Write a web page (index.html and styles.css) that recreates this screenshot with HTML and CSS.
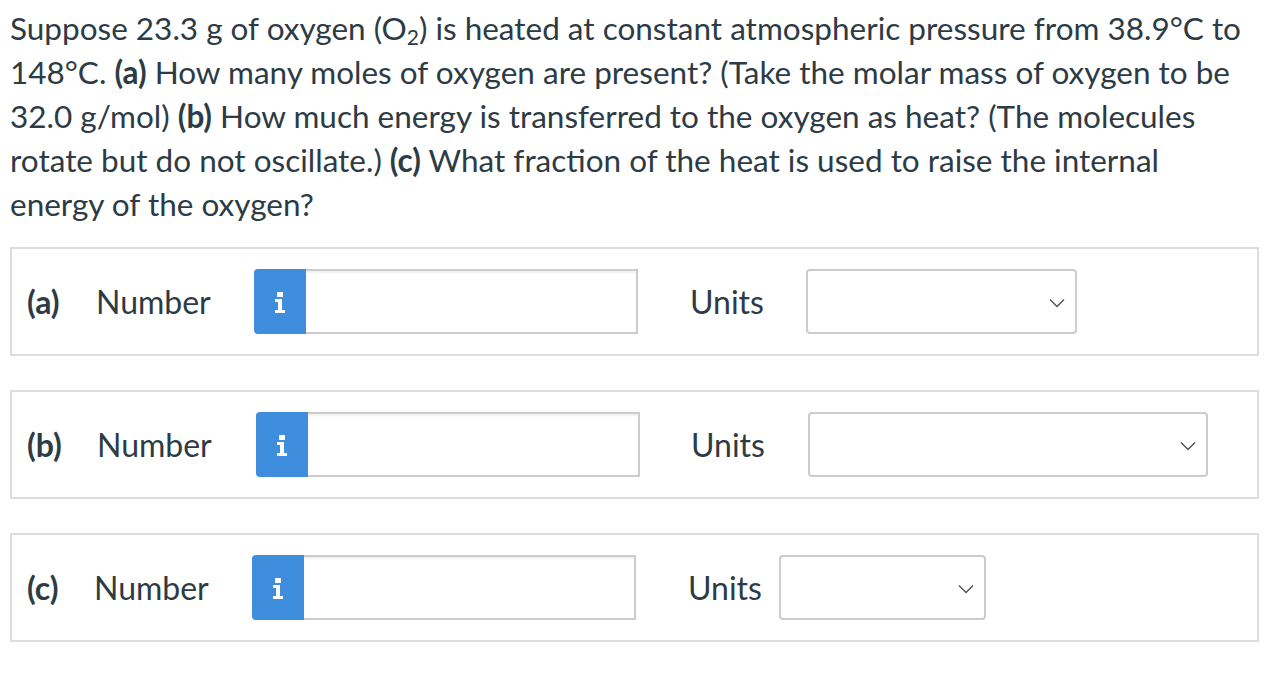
FILE: index.html
```html
<!DOCTYPE html>
<html>
<head>
<meta charset="utf-8">
<link rel="stylesheet" href="styles.css">
</head>
<body>
<p class="question">Suppose 23.3 g of oxygen (O<sub>2</sub>) is heated at constant atmospheric pressure from 38.9°C to 148°C. <b>(a)</b> How many moles of oxygen are present? (Take the molar mass of oxygen to be 32.0 g/mol) <b>(b)</b> How much energy is transferred to the oxygen as heat? (The molecules rotate but do not oscillate.) <b>(c)</b> What fraction of the heat is used to raise the internal energy of the oxygen?</p>

<div class="answer row-a">
  <span class="part">(a)</span>
  <span class="num-label">Number</span>
  <span class="info"><svg width="12" height="22" viewBox="0 0 12 22"><rect x="3" y="0" width="6" height="5" fill="#fff"/><path d="M1 7h7v11h3v3H1v-3h3v-8H1z" fill="#fff"/></svg></span>
  <span class="field"></span>
  <span class="units-label">Units</span>
  <span class="select"><svg width="16" height="10" viewBox="0 0 16 10"><path d="M1 1.5l7 7 7-7" fill="none" stroke="#555" stroke-width="1.5"/></svg></span>
</div>

<div class="answer row-b">
  <span class="part">(b)</span>
  <span class="num-label">Number</span>
  <span class="info"><svg width="12" height="22" viewBox="0 0 12 22"><rect x="3" y="0" width="6" height="5" fill="#fff"/><path d="M1 7h7v11h3v3H1v-3h3v-8H1z" fill="#fff"/></svg></span>
  <span class="field"></span>
  <span class="units-label">Units</span>
  <span class="select"><svg width="16" height="10" viewBox="0 0 16 10"><path d="M1 1.5l7 7 7-7" fill="none" stroke="#555" stroke-width="1.5"/></svg></span>
</div>

<div class="answer row-c">
  <span class="part">(c)</span>
  <span class="num-label">Number</span>
  <span class="info"><svg width="12" height="22" viewBox="0 0 12 22"><rect x="3" y="0" width="6" height="5" fill="#fff"/><path d="M1 7h7v11h3v3H1v-3h3v-8H1z" fill="#fff"/></svg></span>
  <span class="field"></span>
  <span class="units-label">Units</span>
  <span class="select"><svg width="16" height="10" viewBox="0 0 16 10"><path d="M1 1.5l7 7 7-7" fill="none" stroke="#555" stroke-width="1.5"/></svg></span>
</div>
</body>
</html>
```

FILE: styles.css
```css
html, body {
  margin: 0;
  padding: 0;
  background: #fff;
}
body {
  padding: 6px 9px 0 10px;
  font-family: Lato, "Open Sans", sans-serif;
  color: #2d3b45;
}
.question {
  margin: 0 0 21px 0;
  font-size: 31.5px;
  line-height: 44px;
}
.question sub {
  font-size: 21px;
  line-height: 0;
  vertical-align: -5px;
}
.question b {
  font-weight: 700;
}
.answer {
  display: flex;
  align-items: center;
  border: 2px solid #ddd;
  padding: 20px 0 20px 15px;
  margin-bottom: 34px;
  font-size: 32px;
}
.part {
  font-weight: 700;
  width: 69px;
}
.num-label {
  width: 158px;
}
.row-b .part { width: 70px; }
.row-b .num-label { width: 159px; }
.row-c .part { width: 67px; }
.row-c .num-label { width: 158px; }
.info {
  box-sizing: border-box;
  width: 52px;
  height: 65px;
  background: #3f8ddd;
  border-radius: 4px 0 0 4px;
  display: flex;
  align-items: center;
  justify-content: center;
}
.info svg {
  display: block;
  margin-top: 2px;
}
.field {
  box-sizing: border-box;
  width: 332px;
  height: 65px;
  border: 2px solid #ccc;
  border-left: none;
  box-shadow: inset 0 2px 2px rgba(0, 0, 0, 0.06);
  background: #fff;
}
.units-label {
  margin-left: 52px;
  width: 116px;
}
.row-b .units-label { margin-left: 51px; width: 117px; }
.row-c .units-label { width: 91px; }
.select {
  box-sizing: border-box;
  height: 65px;
  border: 2px solid #ccc;
  border-radius: 4px;
  display: flex;
  align-items: center;
  justify-content: flex-end;
  padding-right: 10px;
  background: #fff;
}
.select svg {
  display: block;
  margin-top: 2px;
}
.row-a .select { width: 271px; }
.row-b .select { width: 400px; }
.row-c .select { width: 207px; }
```
